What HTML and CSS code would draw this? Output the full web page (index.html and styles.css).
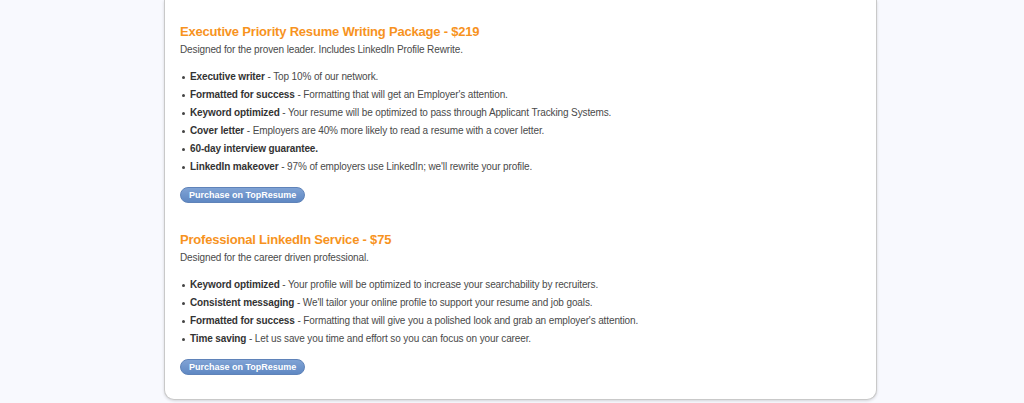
FILE: index.html
```html
<!DOCTYPE html>
<html lang="en">
<head>
	<meta charset="UTF-8">
	<title>Resume Writing Packages</title>
	<link rel="stylesheet" href="styles.css">
</head>
<body>
	<div class="card">
		<div class="package">
			<h2 class="packageTitle">Executive Priority Resume Writing Package - $219</h2>
			<p class="packageIntro">Designed for the proven leader. Includes LinkedIn Profile Rewrite.</p>
			<ul class="features">
				<li><b>Executive writer</b> - Top 10% of our network.</li>
				<li><b>Formatted for success</b> - Formatting that will get an Employer's attention.</li>
				<li><b>Keyword optimized</b> - Your resume will be optimized to pass through Applicant Tracking Systems.</li>
				<li><b>Cover letter</b> - Employers are 40% more likely to read a resume with a cover letter.</li>
				<li><b>60-day interview guarantee.</b></li>
				<li><b>LinkedIn makeover</b> - 97% of employers use LinkedIn; we'll rewrite your profile.</li>
			</ul>
			<a class="purchaseButton" href="#">Purchase on TopResume</a>
		</div>
		<div class="package">
			<h2 class="packageTitle">Professional LinkedIn Service - $75</h2>
			<p class="packageIntro">Designed for the career driven professional.</p>
			<ul class="features">
				<li><b>Keyword optimized</b> - Your profile will be optimized to increase your searchability by recruiters.</li>
				<li><b>Consistent messaging</b> - We'll tailor your online profile to support your resume and job goals.</li>
				<li><b>Formatted for success</b> - Formatting that will give you a polished look and grab an employer's attention.</li>
				<li><b>Time saving</b> - Let us save you time and effort so you can focus on your career.</li>
			</ul>
			<a class="purchaseButton" href="#">Purchase on TopResume</a>
		</div>
	</div>
</body>
</html>
```

FILE: styles.css
```css
* {
	margin: 0;
	padding: 0;
	box-sizing: border-box;
}

body {
	background-color: #f8f9fe;
	font-family: "Liberation Sans", Arial, sans-serif;
	color: #4a4a4a;
	font-size: 10px;
	letter-spacing: -0.12px;
	height: 403px;
	overflow: hidden;
}

.card {
	margin-left: 164px;
	width: 713px;
	height: 400px;
	background-color: #fff;
	border: 1px solid #c9c9c9;
	border-top: 0;
	border-radius: 0 0 10px 10px;
	box-shadow: 0 1px 3px rgba(0, 0, 0, 0.15);
	padding: 24px 15px 0 15px;
}

.package {
	margin-bottom: 29px;
}

.packageTitle {
	color: #f7931e;
	font-size: 13px;
	letter-spacing: -0.2px;
	line-height: 16px;
	font-weight: bold;
}

.packageIntro {
	line-height: 18px;
	margin-top: 1px;
}

.features {
	list-style: none;
	margin-top: 9px;
	margin-bottom: 11px;
}

.features li {
	position: relative;
	padding-left: 10px;
	line-height: 18px;
}

.features li::before {
	content: "";
	position: absolute;
	left: 2px;
	top: 8px;
	width: 3px;
	height: 3px;
	border-radius: 50%;
	background-color: #444;
}

.features b {
	color: #333;
}

.purchaseButton {
	display: inline-block;
	height: 16px;
	line-height: 15px;
	padding: 0 8px;
	border: 1px solid #5f83b9;
	border-radius: 8px;
	background: linear-gradient(#80a3d5, #5f88c3);
	color: #fff;
	font-size: 9px;
	letter-spacing: 0;
	font-weight: bold;
	text-decoration: none;
}
```
